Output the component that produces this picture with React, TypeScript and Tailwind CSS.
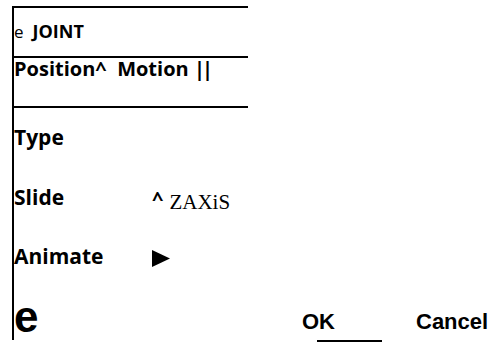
export default function App() {
  return (
    <div className="w-[496px] h-[353px] bg-white pt-[6px] text-black" style={{ fontFamily: '"Open Sans", sans-serif' }}>
      <div className="ml-[12px] border-l-2 border-black h-[334px] flex flex-col">
        <div className="w-[234px] h-[50px] border-t-2 border-black pt-[14px] flex items-baseline">
          <span className="text-[17px] leading-none">e</span>
          <span className="text-[18px] font-bold leading-none ml-[9px]">JOINT</span>
        </div>
        <div className="w-[234px] h-[50px] border-t-2 border-black pt-[1px] flex items-baseline">
          <span className="text-[20px] font-bold leading-none whitespace-pre">Position^  Motion </span>
          <span className="text-[20px] font-bold leading-none tracking-[-3px]">||</span>
        </div>
        <div className="w-[234px] border-t-2 border-black" />
        <div className="flex flex-col">
          <div className="mt-[19px] flex items-start h-[21px]">
            <span className="text-[21px] font-bold leading-none">Type</span>
          </div>
          <div className="mt-[39px] flex items-start h-[21px]">
            <span className="text-[21px] font-bold leading-none w-[138px]">Slide</span>
            <span className="text-[20px] font-bold leading-none mt-[2px]">^</span>
            <span className="text-[21px] leading-none ml-[6px] mt-[5px]" style={{ fontFamily: '"Liberation Serif", serif' }}>ZAXiS</span>
          </div>
          <div className="mt-[38px] flex items-start h-[21px]">
            <span className="text-[21px] font-bold leading-none w-[138px]">Animate</span>
            <svg width="18" height="17" viewBox="0 0 18 17" className="mt-[4px]">
              <polygon points="0,0 18,8.5 0,17" fill="black" />
            </svg>
          </div>
          <div className="mt-[28px] flex items-start h-[44px]" style={{ fontFamily: '"Liberation Sans", sans-serif' }}>
            <span className="text-[44px] font-bold leading-none w-[288px]">e</span>
            <span className="text-[22px] font-bold leading-none w-[114px] mt-[16px]">OK</span>
            <span className="text-[22px] font-bold leading-none mt-[16px]">Cancel</span>
          </div>
        </div>
      </div>
      <div className="ml-[317px] w-[65px] h-[2px] bg-black" />
    </div>
  );
}
